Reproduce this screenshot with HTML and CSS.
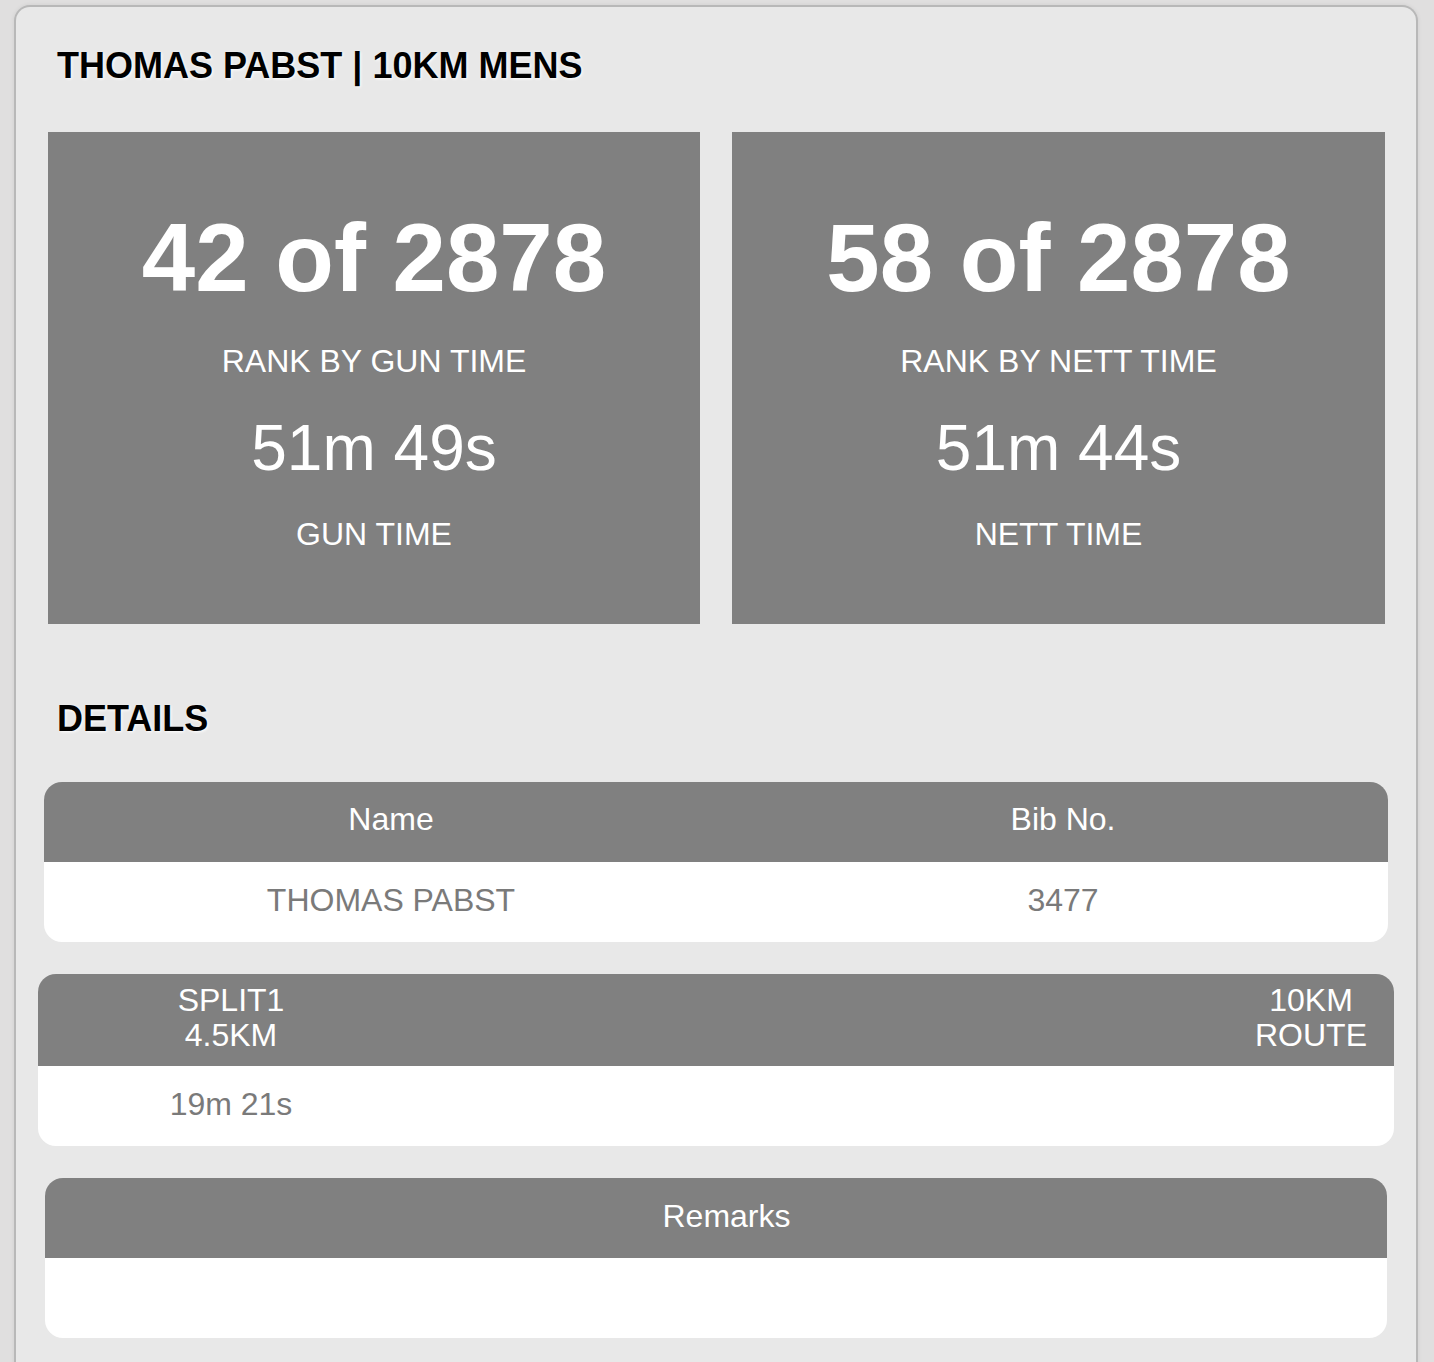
FILE: index.html
```html
<!DOCTYPE html>
<html lang="en">
<head>
<meta charset="utf-8">
<title>Thomas Pabst | 10KM Mens</title>
<link rel="stylesheet" href="styles.css">
</head>
<body>
<div class="card">
  <h1 class="heading heading-top">THOMAS PABST | 10KM MENS</h1>
  <div class="stats">
    <div class="stat">
      <div class="stat-rank">42 of 2878</div>
      <div class="stat-label">RANK BY GUN TIME</div>
      <div class="stat-time">51m 49s</div>
      <div class="stat-label stat-label-last">GUN TIME</div>
    </div>
    <div class="stat">
      <div class="stat-rank">58 of 2878</div>
      <div class="stat-label">RANK BY NETT TIME</div>
      <div class="stat-time">51m 44s</div>
      <div class="stat-label stat-label-last">NETT TIME</div>
    </div>
  </div>
  <h2 class="heading heading-details">DETAILS</h2>

  <div class="tbl tbl-info">
    <div class="th">Name</div>
    <div class="th">Bib No.</div>
    <div class="td">THOMAS PABST</div>
    <div class="td">3477</div>
  </div>

  <div class="tbl tbl-splits">
    <div class="th th-two">SPLIT1<br>4.5KM</div>
    <div class="th th-two"></div>
    <div class="th th-two">10KM<br>ROUTE</div>
    <div class="td">19m 21s</div>
    <div class="td"></div>
    <div class="td"></div>
  </div>

  <div class="tbl tbl-remarks">
    <div class="th th-remarks">Remarks</div>
    <div class="td td-empty"></div>
  </div>
</div>
</body>
</html>
```
FILE: styles.css
```css
html, body {
  margin: 0;
  padding: 0;
}
body {
  background: #e0dfdf;
  font-family: "Liberation Sans", Arial, Helvetica, sans-serif;
  height: 1362px;
  overflow: hidden;
}
.card {
  margin: 5px 16px 0 14px;
  border: 2px solid #b8b8b8;
  border-bottom: none;
  border-radius: 16px 16px 0 0;
  background: #e8e8e8;
  padding: 0 31px 40px 32px;
  box-shadow: 0 0 4px rgba(0,0,0,0.08);
}
.heading {
  margin: 0;
  font-size: 36px;
  font-weight: bold;
  line-height: 36px;
  color: #000;
  text-shadow: 1px 1px 3px #fff;
  margin-left: 9px;
}
.heading-top {
  padding-top: 41px;
}
.stats {
  display: grid;
  grid-template-columns: 652px 1fr;
  gap: 32px;
  margin-top: 48px;
}
.stat {
  background: #808080;
  color: #fff;
  text-align: center;
  padding: 78px 0 74px;
  display: flex;
  flex-direction: column;
  align-items: center;
}
.stat-rank {
  font-size: 96px;
  font-weight: bold;
  line-height: 96px;
}
.stat-label {
  font-size: 32px;
  line-height: 32px;
  margin-top: 39px;
}
.stat-time {
  font-size: 64px;
  line-height: 64px;
  margin-top: 39px;
}
.stat-label-last {
  margin-top: 38px;
}
.heading-details {
  margin-top: 77px;
}
.tbl {
  display: grid;
  border-radius: 18px;
  overflow: hidden;
  font-size: 32px;
  line-height: 37px;
  text-align: center;
}
.th {
  background: #808080;
  color: #fff;
  padding: 19px 0 24px;
}
.td {
  background: #fff;
  color: #7a7a7a;
  padding: 20px 0 23px;
}
.tbl-info {
  grid-template-columns: 694px 1fr;
  margin: 45px -3px 0 -4px;
}
.tbl-splits {
  grid-template-columns: 386px 1fr 166px;
  margin: 32px -9px 0 -10px;
}
.th-two {
  line-height: 35px;
  padding: 9px 0 13px;
}
.tbl-splits .td {
  padding: 20px 0 23px;
  min-height: 37px;
}
.tbl-remarks {
  grid-template-columns: 1fr;
  margin: 32px -2px 0 -3px;
}
.th-remarks {
  padding: 20px 0 23px 21px;
}
.td-empty {
  height: 37px;
}
```
